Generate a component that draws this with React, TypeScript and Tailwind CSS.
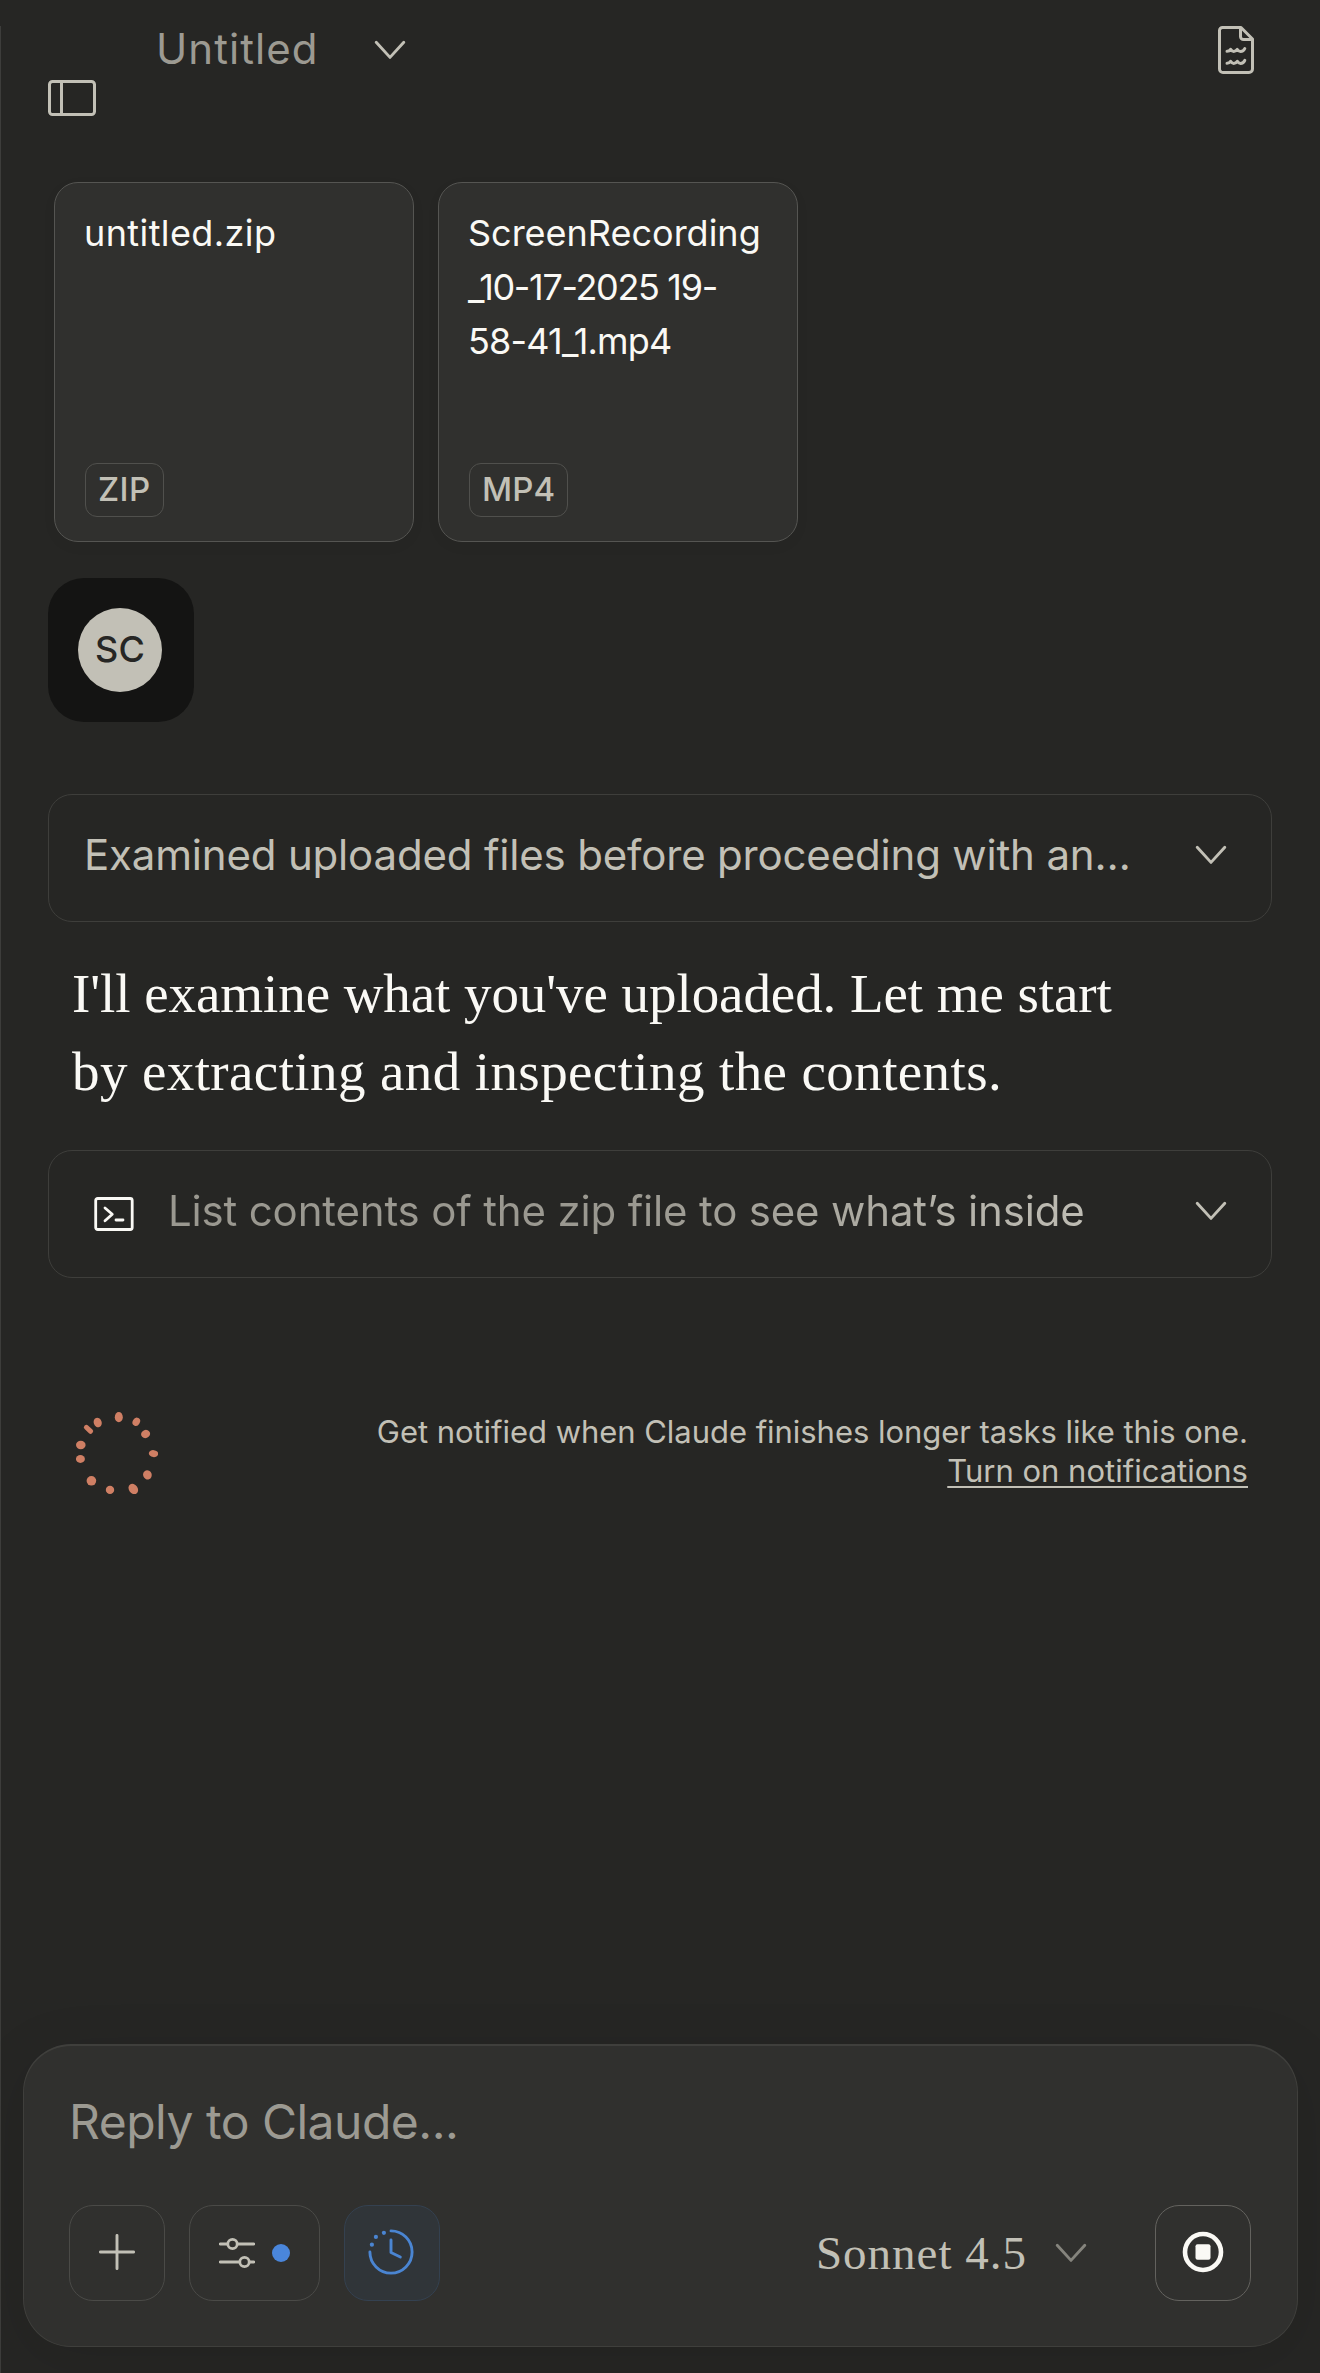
import React from "react";

type IconProps = { className?: string };

function Chevron({ className = "" }: IconProps) {
  return (
    <svg viewBox="0 0 32 20" className={`h-5 w-8 shrink-0 ${className}`} fill="none" stroke="currentColor" strokeWidth="2.9" strokeLinecap="round" strokeLinejoin="round">
      <path d="M2.2 2.2 16 17.4 29.8 2.2" />
    </svg>
  );
}

function SidebarIcon() {
  return (
    <svg viewBox="0 0 48 36" className="mt-20 h-9 w-12 shrink-0" fill="none" stroke="currentColor" strokeWidth="3">
      <rect x="1.5" y="1.5" width="45" height="33" rx="3" />
      <path d="M13.5 2v32" />
    </svg>
  );
}

function DocumentIcon() {
  return (
    <svg viewBox="0 0 36 48" className="mt-[26px] h-12 w-9 shrink-0" fill="none" stroke="currentColor" strokeWidth="3" strokeLinejoin="round" strokeLinecap="round">
      <path d="M4.5 1.5H23L34.5 13v30a3.5 3.5 0 0 1-3.5 3.5H5A3.5 3.5 0 0 1 1.5 43V4.5a3 3 0 0 1 3-3Z" />
      <path d="M22.5 2v8.5a3 3 0 0 0 3 3H34" />
      <path d="M9 25.3c2.200 0 2.800-.6 3.600-1.900 1 1.600 1.700 2.100 3.100 2.100 1.600 0 2.600-.6 3.600-2.100.9 1.500 1.700 2.100 3.200 2.100 2.100 0 3.500-1.200 4.300-3" />
      <path d="M9 37.200c2.200 0 2.800-.6 3.600-1.900 1 1.600 1.700 2.100 3.100 2.100 1.600 0 2.600-.6 3.600-2.100.9 1.500 1.700 2.100 3.200 2.100 2.100 0 3.500-1.200 4.300-3" />
    </svg>
  );
}

function TerminalIcon() {
  return (
    <svg viewBox="0 0 40 34" className="h-[34px] w-10 shrink-0 text-[#faf9f5]" fill="none" stroke="currentColor" strokeWidth="2.8" strokeLinecap="round" strokeLinejoin="round">
      <rect x="1.7" y="1.5" width="36.5" height="31" rx="2" />
      <path d="m11 11 7.300 6.200-7.300 6.600M22 23h7" />
    </svg>
  );
}

function Spinner() {
  return (
    <svg viewBox="76 1412 82 82" className="h-[82px] w-[82px] shrink-0" fill="#cf7f64">
      <ellipse cx="118.8" cy="1417.2" rx="4" ry="5.1" />
      <ellipse cx="136.3" cy="1421.8" rx="3.6" ry="4.3" transform="rotate(30 136.3 1421.8)" />
      <ellipse cx="145.6" cy="1434" rx="4.6" ry="4.1" transform="rotate(-20 145.6 1434)" />
      <ellipse cx="153.5" cy="1453.6" rx="4.7" ry="3.5" transform="rotate(8 153.5 1453.6)" />
      <ellipse cx="147.4" cy="1474.8" rx="4.3" ry="4.7" transform="rotate(-20 147.4 1474.8)" />
      <ellipse cx="133.3" cy="1489" rx="4.4" ry="5.6" transform="rotate(-35 133.3 1489)" />
      <ellipse cx="110" cy="1489.9" rx="4.2" ry="4.1" />
      <ellipse cx="91.4" cy="1480.8" rx="4.8" ry="4.8" />
      <ellipse cx="80.4" cy="1459" rx="4.5" ry="3.9" />
      <ellipse cx="80.8" cy="1445" rx="4.8" ry="4.2" />
      <rect x="83.2" y="1426.8" width="10.6" height="5" rx="2.3" transform="rotate(43 88.5 1429.3)" />
      <ellipse cx="97.7" cy="1422.5" rx="4" ry="4.8" transform="rotate(-20 97.7 1422.5)" />
    </svg>
  );
}

function PlusIcon() {
  return (
    <svg viewBox="0 0 36 36" className="h-9 w-9" fill="none" stroke="currentColor" strokeWidth="2.9" strokeLinecap="round">
      <path d="M18 1.400v33.200M1.400 18h33.200" />
    </svg>
  );
}

function SlidersIcon() {
  return (
    <svg viewBox="0 0 36 32" className="h-8 w-9" fill="none" stroke="currentColor" strokeWidth="2.8" strokeLinecap="round">
      <path d="M1.300 7H8.500M18.500 7h16.200M1.300 25h18.200M30.500 25h4.200" />
      <circle cx="13.5" cy="7" r="4.7" />
      <circle cx="25.5" cy="25" r="4.7" />
    </svg>
  );
}

function ClockIcon() {
  return (
    <svg viewBox="0 0 46 46" className="h-[46px] w-[46px]" fill="none" stroke="currentColor" strokeWidth="2.9" strokeLinecap="round" strokeLinejoin="round">
      <path d="M23 1.900a21.100 21.100 0 1 1-21.100 21.100M23 11v12.500l9.300 4.500" />
      <g fill="currentColor" stroke="none">
        <circle cx="15.9" cy="3.8" r="2.1" />
        <circle cx="7.9" cy="7.9" r="2.1" />
        <circle cx="3.9" cy="15.7" r="2.1" />
      </g>
    </svg>
  );
}

function StopIcon() {
  return (
    <svg viewBox="0 0 42 42" className="h-[42px] w-[42px] text-[#faf9f5]" fill="none">
      <circle cx="21" cy="21" r="18" stroke="currentColor" strokeWidth="4.6" />
      <rect x="13.5" y="13.2" width="15" height="15.6" rx="2" fill="currentColor" />
    </svg>
  );
}

function FileCard({ lines, kind }: { lines: React.ReactNode; kind: React.ReactNode }) {
  return (
    <article className="flex h-[360px] w-[360px] flex-col items-start justify-between rounded-3xl border border-[#555552] bg-[#30302e] px-[29px] pt-[23px] pb-6 shadow-[0_4px_16px_rgba(0,0,0,0.03)]">
      <div className="text-[36px] leading-[54px] whitespace-nowrap text-[#faf9f5]">{lines}</div>
      <div className="ml-px flex h-[54px] items-center rounded-xl border border-[#50504d] px-3 pb-[2px] text-[33px] leading-none font-medium">{kind}</div>
    </article>
  );
}

export default function App() {
  return (
    <div className="flex h-[2373px] w-[1320px] flex-col overflow-hidden bg-[#262624] font-[Inter,sans-serif] text-[#c2c0b6]">
      <div className="h-[26px] shrink-0" />
      <div className="flex grow flex-col border-l border-[#3d3d3b]">
        <header className="-mt-[26px] flex h-[182px] shrink-0 items-start pr-[66px] pl-[47px]">
          <SidebarIcon />
          <h1 className="mt-5 ml-[60px] w-[218px] text-[42px] leading-[57px] tracking-[1.05px] text-[#9c9a92]">Untitled</h1>
          <Chevron className="mt-10" />
          <div className="ml-auto">
            <DocumentIcon />
          </div>
        </header>

        <main className="flex flex-col pr-12 pl-[47px]">
          <section className="flex gap-6 pl-[6px]">
            <FileCard lines={<span className="tracking-[0.4px]">untitled.zip</span>} kind={<span className="tracking-[0.4px]">ZIP</span>} />
            <FileCard
              lines={
                <>
                  <div>ScreenRecording</div>
                  <div className="tracking-[-1.34px]">_10-17-2025 19-</div>
                  <div className="tracking-[-0.8px]">58-41_1.mp4</div>
                </>
              }
              kind={<span className="tracking-[0.1px]">MP4</span>}
            />
          </section>

          <div className="mt-9 flex h-36 w-[146px] items-center rounded-[36px] bg-[#141413] pl-[30px]">
            <div className="flex h-[84px] w-[84px] items-center justify-center rounded-full bg-[#c2c0b6] pb-[2px] text-[36px] leading-none font-medium tracking-[0.2px] text-[#262624]">SC</div>
          </div>

          <button className="mt-[72px] flex h-32 items-center justify-between rounded-3xl border border-[#3e3e3b] pr-[44px] pb-[7px] pl-[35px] text-left">
            <span className="text-[42px] leading-[60px] tracking-[-0.18px] whitespace-nowrap">
              Examined uploaded files before proceeding with an<span className="tracking-normal">…</span>
            </span>
            <Chevron />
          </button>

          <div className="mt-[33px] pl-6 font-['Liberation_Serif',serif] text-[55px] leading-[78px] whitespace-nowrap text-[#faf9f5]">
            <div className="tracking-[-0.07px]">I'll examine what you've uploaded. Let me start</div>
            <div className="tracking-[0.4px]">by extracting and inspecting the contents.</div>
          </div>

          <button className="mt-[39px] flex h-32 items-center rounded-3xl border border-[#3e3e3b] pr-[44px] pb-[7px] pl-[45px] text-left">
            <span className="mt-[6px] flex">
              <TerminalIcon />
            </span>
            <span className="ml-[34px] bg-linear-to-r from-[#9a9890] from-50% to-[#bebcb3] bg-clip-text text-[42px] leading-[60px] tracking-[-0.17px] whitespace-nowrap text-transparent">
              List contents of the zip file to see what’s inside
            </span>
            <Chevron className="ml-auto" />
          </button>

          <section className="mt-[134px] flex items-start justify-between pr-6 pl-7">
            <Spinner />
            <div className="text-right text-[31px] leading-[39px]">
              <p className="tracking-[-0.04px]">Get notified when Claude finishes longer tasks like this one.</p>
              <a className="underline decoration-2 underline-offset-[4px]">Turn on notifications</a>
            </div>
          </section>
        </main>

        <footer className="mt-auto mr-[22px] mb-[26px] ml-[22px] flex h-[303px] flex-col rounded-[48px] border border-t-2 border-[#3f3f3c] bg-[#30302e] pr-[46px] pl-[45px] shadow-[0_12px_60px_rgba(0,0,0,0.1)]">
          <div className="mt-[46px] text-[48px] leading-[60px] tracking-[-0.5px] text-[#9c9a92]">Reply to Claude...</div>
          <div className="mt-[53px] flex items-center">
            <button className="flex h-24 w-24 items-center justify-center rounded-3xl border border-[#4a4a47] pb-[2px]">
              <PlusIcon />
            </button>
            <button className="ml-6 flex h-24 w-[131px] items-center rounded-3xl border border-[#4a4a47] pl-[29px]">
              <SlidersIcon />
              <span className="ml-[17px] h-[18px] w-[18px] rounded-full bg-[#4a86db]" />
            </button>
            <button className="ml-6 flex h-24 w-24 items-center justify-center rounded-3xl border border-[#344150] bg-[#303539] pr-[3px] pb-[2px] text-[#4a85d2]">
              <ClockIcon />
            </button>
            <div className="ml-auto flex items-center">
              <span className="mr-[28px] font-['Liberation_Serif',serif] text-[47px] leading-[60px] tracking-[1px]">Sonnet 4.5</span>
              <Chevron className="text-[#85847d]" />
              <button className="ml-[68px] flex h-24 w-24 items-center justify-center rounded-3xl border border-[#63625e] pb-[2px]">
                <StopIcon />
              </button>
            </div>
          </div>
        </footer>
      </div>
    </div>
  );
}
